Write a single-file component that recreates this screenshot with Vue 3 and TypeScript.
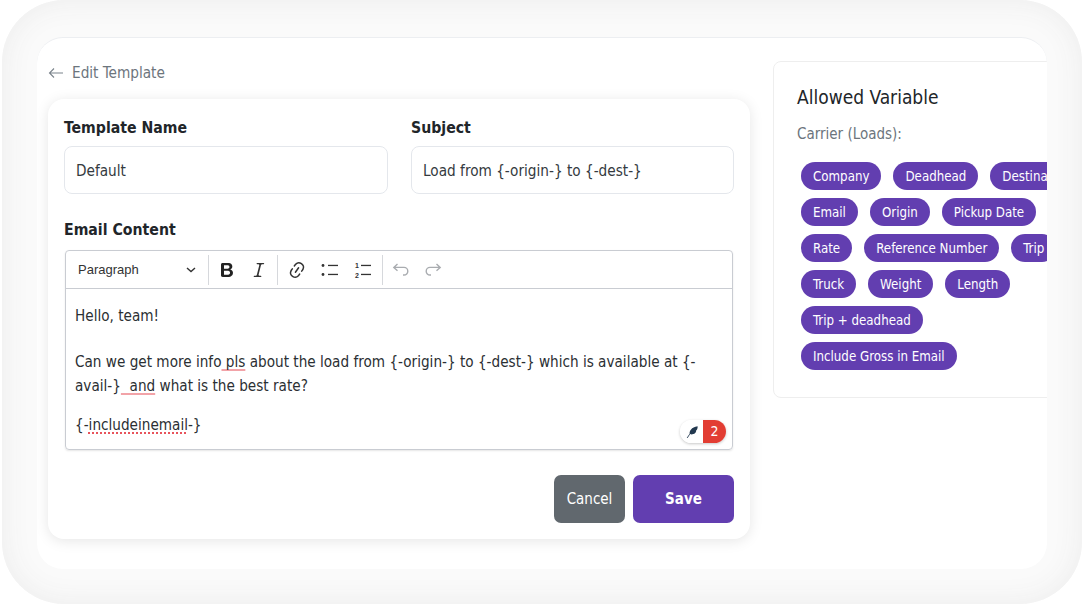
<script setup lang="ts">
import { ref } from 'vue';

const templateName = ref('Default');
const subject = ref('Load from {-origin-} to {-dest-}');

const variables: string[] = [
  'Company', 'Deadhead', 'Destination', 'Email', 'Origin', 'Pickup Date',
  'Rate', 'Reference Number', 'Trip', 'Truck', 'Weight', 'Length',
  'Trip + deadhead', 'Include Gross in Email',
];
</script>

<template>
  <div class="frame">
    <div class="inner">
      <main class="left">
        <div class="back">
          <svg width="16" height="12" viewBox="0 0 16 12" fill="none" stroke="#7b848c" stroke-width="1.1">
            <path d="M15 6H1.5M6 1.5 1.5 6 6 10.5" />
          </svg>
          <span>Edit Template</span>
        </div>
        <section class="card">
          <div class="fields">
            <div class="field">
              <label>Template Name</label>
              <input v-model="templateName" type="text">
            </div>
            <div class="field">
              <label>Subject</label>
              <input v-model="subject" type="text">
            </div>
          </div>
          <label class="content-label">Email Content</label>
          <div class="editor">
            <div class="toolbar">
              <div class="dropdown">
                <span>Paragraph</span>
                <svg width="10" height="6" viewBox="0 0 10 6" fill="none" stroke="#333" stroke-width="1.4"><path d="M1 1l4 3.6L9 1" /></svg>
              </div>
              <i class="sep"></i>
              <svg class="tool bold" viewBox="0 0 20 20"><path d="M10.187 17H5.773c-.637 0-1.092-.138-1.364-.415-.273-.277-.409-.718-.409-1.323V4.738c0-.617.14-1.062.419-1.332.279-.27.73-.406 1.354-.406h4.68c.69 0 1.288.041 1.793.124.506.083.96.242 1.36.478.341.197.644.447.906.75a3.262 3.262 0 0 1 .808 2.162c0 1.401-.722 2.426-2.167 3.075C15.05 10.175 16 11.315 16 13.01a3.756 3.756 0 0 1-2.296 3.504 6.1 6.1 0 0 1-1.517.377c-.571.073-1.238.11-2 .11zm-.217-6.217H7v4.087h3.069c1.977 0 2.965-.69 2.965-2.072 0-.707-.256-1.22-.768-1.537-.512-.319-1.277-.478-2.296-.478zM7 5.13v3.619h2.606c.729 0 1.292-.067 1.69-.2a1.6 1.6 0 0 0 .91-.765c.165-.267.247-.566.247-.897 0-.707-.26-1.176-.778-1.409-.519-.232-1.31-.348-2.375-.348H7z" /></svg>
              <svg class="tool" viewBox="0 0 20 20"><path d="m9.586 14.633.021.004c-.036.335.095.655.393.962.082.083.173.15.274.201h1.474a.6.6 0 1 1 0 1.2H5.304a.6.6 0 0 1 0-1.2h1.15c.474-.07.809-.182 1.005-.334.157-.122.291-.32.404-.597l2.416-9.55a1.053 1.053 0 0 0-.281-.823 1.12 1.12 0 0 0-.442-.296H8.15a.6.6 0 0 1 0-1.2h6.443a.6.6 0 1 1 0 1.2h-1.195c-.376.056-.65.155-.823.296-.215.175-.423.439-.623.79l-2.366 9.347z" /></svg>
              <i class="sep"></i>
              <svg class="tool link" viewBox="0 0 20 20"><path d="m11.077 15 .991-1.416a.75.75 0 1 1 1.229.86l-1.148 1.64a.748.748 0 0 1-.217.206 5.251 5.251 0 0 1-8.503-5.955.741.741 0 0 1 .12-.274l1.147-1.639a.75.75 0 1 1 1.228.86L4.933 10.7l.006.003a3.75 3.75 0 0 0 6.132 4.294l.006.004zm5.494-5.335a.748.748 0 0 1-.12.274l-1.147 1.639a.75.75 0 1 1-1.228-.86l.86-1.23a3.75 3.75 0 0 0-6.144-4.301l-.86 1.229a.75.75 0 0 1-1.229-.86l1.148-1.64a.748.748 0 0 1 .217-.206 5.251 5.251 0 0 1 8.503 5.955zm-4.563-2.532a.75.75 0 0 1 .184 1.045l-3.155 4.505a.75.75 0 1 1-1.229-.86l3.155-4.506a.75.75 0 0 1 1.045-.184z" /></svg>
              <svg class="tool list" viewBox="0 0 20 20"><circle cx="3" cy="5.5" r="1.4" /><circle cx="3" cy="14.5" r="1.4" /><rect x="8" y="4.8" width="10" height="1.3" /><rect x="8" y="13.8" width="10" height="1.3" /></svg>
              <svg class="tool list" viewBox="0 0 20 20"><text x="2" y="8" class="num">1</text><text x="2" y="17.5" class="num">2</text><rect x="8" y="4.8" width="10" height="1.3" /><rect x="8" y="13.8" width="10" height="1.3" /></svg>
              <i class="sep"></i>
              <svg class="tool history" viewBox="0 0 20 20" fill="none"><path d="M6.5 4 2.8 7.4l3.7 3.4M3 7.4h10a3.8 3.8 0 0 1 0 7.6h-1" /></svg>
              <svg class="tool history" viewBox="0 0 20 20" fill="none"><path d="M13.5 4l3.7 3.4-3.7 3.4M17 7.4H7a3.8 3.8 0 0 0 0 7.6h1" /></svg>
            </div>
            <div class="body">
              <p>Hello, team!</p>
              <p class="gap">Can we get more info<span class="spell"> pls</span> about the load from {-origin-} to {-dest-} which is available at {-avail-}<span class="spell">&nbsp; and</span> what is the best rate?</p>
              <p class="last">{-<span class="dotted">includeinemail</span>-}</p>
              <div class="badge">
                <span class="feather">
                  <svg width="14" height="14" viewBox="0 0 12 12"><path d="M1.5 11 4 7.6C3.6 5.4 5.4 1.6 10.8 1c.2 2-.5 3.2-1.3 3.8.2.9-.6 3-3.1 3.2-.7.1-1.4 0-1.9-.2L2.2 11.2z" fill="#22384f" /></svg>
                </span>
                <span class="count">2</span>
              </div>
            </div>
          </div>
          <div class="actions">
            <button class="cancel" type="button">Cancel</button>
            <button class="save" type="button">Save</button>
          </div>
        </section>
      </main>
      <aside class="vars">
        <h3>Allowed Variable</h3>
        <p class="sub">Carrier (Loads):</p>
        <div class="chips">
          <span v-for="name in variables" :key="name" class="chip">{{ name }}</span>
        </div>
      </aside>
    </div>
  </div>
</template>

<style>
html, body {
  margin: 0;
  background: #fff;
}
</style>

<style scoped>
.frame {
  box-sizing: border-box;
  width: 1080px;
  height: 604px;
  margin-left: 2px;
  padding: 37px 35px 35px;
  border-radius: 62px;
  background: #fafafa;
  box-shadow: inset 0 0 30px #ececec;
  font-family: "DejaVu Sans", sans-serif;
  font-stretch: condensed;
  color: #24292e;
}
.inner {
  display: flex;
  gap: 23px;
  box-sizing: border-box;
  height: 532px;
  padding: 0 0 0 11px;
  border-top: 1px solid #eceef1;
  border-radius: 26px;
  background: #fff;
  overflow: hidden;
}
.left {
  flex: 0 0 702px;
}
.back {
  display: flex;
  align-items: center;
  gap: 8px;
  height: 61px;
  padding: 8px 0 0;
  box-sizing: border-box;
  font-size: 15.2px;
  color: #6c757d;
}
.card {
  box-sizing: border-box;
  height: 440px;
  padding: 17px 16px 16px;
  border-radius: 16px;
  background: #fff;
  box-shadow: 0 2px 14px rgba(0, 0, 0, 0.1);
}
.fields {
  display: grid;
  grid-template-columns: 324px 323px;
  gap: 23px;
}
.field label, .content-label {
  display: block;
  font-size: 15.7px;
  font-weight: 700;
  line-height: 24px;
  color: #212529;
}
.field input {
  box-sizing: border-box;
  width: 100%;
  height: 48px;
  margin-top: 6px;
  padding: 2px 12px 0 11px;
  border: 1px solid #e4e7ec;
  border-radius: 8px;
  outline: none;
  font: inherit;
  font-size: 15.2px;
  color: #343a40;
}
.content-label {
  margin-top: 24px;
}
.editor {
  width: 668px;
  height: 200px;
  box-sizing: border-box;
  margin: 8px 0 0 1px;
  border: 1px solid #c9ccd2;
  border-radius: 4px;
  box-shadow: 0 1px 2px rgba(0, 0, 0, 0.1);
}
.toolbar {
  display: flex;
  align-items: center;
  height: 37px;
  border-bottom: 1px solid #c9ccd2;
}
.dropdown {
  display: flex;
  align-items: center;
  justify-content: space-between;
  box-sizing: border-box;
  width: 142px;
  padding: 0 12px 0 12px;
  font-family: "Liberation Sans", sans-serif;
  font-size: 13px;
  color: #333;
}
.sep {
  width: 1px;
  height: 30px;
  background: #d6d8dc;
}
.tool {
  width: 20px;
  height: 20px;
  margin: 0 6px;
  fill: #333;
}
.sep + .tool {
  margin-left: 8px;
}
.sep + .tool + .tool {
  margin-left: 6px;
}
.tool.bold {
  fill: #222;
}
.tool + .sep {
  margin-left: 2px;
}
.sep + .tool.link {
  margin-left: 9px;
  margin-right: 7px;
}
.list {
  margin-left: 7px;
  margin-right: 6px;
}
.list + .sep {
  margin-left: 3px;
}
.list rect {
  fill: #333;
}
.num {
  font-family: "Liberation Sans", sans-serif;
  font-size: 7px;
  font-weight: 700;
}
.history {
  stroke: #a9acb0;
  stroke-width: 1.4;
  fill: none;
}
.body {
  position: relative;
  height: 160px;
  box-sizing: border-box;
  padding: 15px 9px 0;
  font-size: 15.15px;
  line-height: 24px;
  color: #2b2f33;
}
.body p {
  margin: 0;
}
.body .gap {
  margin-top: 22px;
}
.body .last {
  margin-top: 15px;
}
.spell {
  text-decoration: underline 2px #f2a3a8;
  text-underline-offset: 2px;
  text-decoration-skip-ink: none;
}
.dotted {
  text-decoration: underline dotted 2px #e8535b;
  text-underline-offset: 2px;
  text-decoration-skip-ink: none;
}
.badge {
  position: absolute;
  right: 6px;
  bottom: 6px;
  display: flex;
  height: 23px;
  border-radius: 12px;
  overflow: hidden;
  box-shadow: 0 1px 3px rgba(0, 0, 0, 0.22);
}
.feather {
  display: flex;
  align-items: center;
  justify-content: center;
  width: 23px;
  background: #fff;
}
.count {
  width: 23px;
  background: #e23d33;
  color: #fff;
  font-size: 14px;
  line-height: 23px;
  text-align: center;
}
.actions {
  display: flex;
  justify-content: flex-end;
  gap: 8px;
  margin-top: 25px;
}
.actions button {
  height: 48px;
  padding-top: 1px;
  border: none;
  border-radius: 7px;
  color: #fff;
  font-family: inherit;
  font-stretch: condensed;
  font-size: 15px;
}
.cancel {
  width: 71px;
  background: #61686e;
}
.save {
  width: 101px;
  background: #623eb0;
  font-weight: 700;
}
.vars {
  flex: 0 0 342px;
  box-sizing: border-box;
  height: 337px;
  margin-top: 23px;
  padding: 23px 0 0 23px;
  border: 1px solid #eeeeee;
  border-radius: 8px;
}
.vars h3 {
  margin: 0;
  font-size: 19px;
  font-weight: 400;
  line-height: 24px;
  color: #212529;
}
.sub {
  margin: 13px 0 0;
  font-size: 15px;
  line-height: 24px;
  color: #6c757d;
}
.chips {
  display: flex;
  flex-wrap: wrap;
  gap: 8px 12px;
  margin: 16px 26px 0 4px;
}
.chip {
  box-sizing: border-box;
  height: 28px;
  padding: 0 12px;
  border-radius: 14px;
  background: #623eb0;
  color: #fff;
  font-size: 13.2px;
  line-height: 29px;
  white-space: nowrap;
}
</style>
